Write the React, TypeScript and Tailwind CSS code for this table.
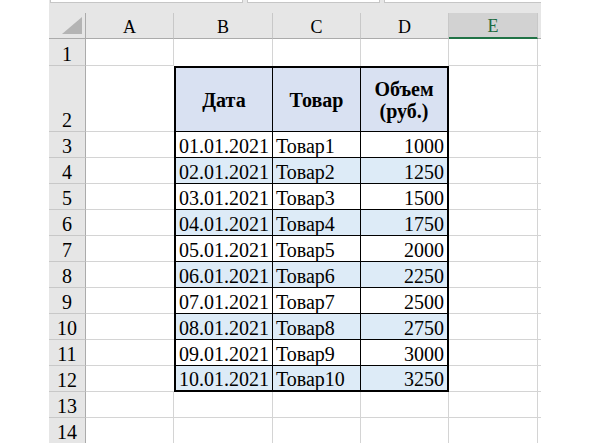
import React from 'react';

const cols = ['A', 'B', 'C', 'D', 'E', 'F'];
const rowNums = Array.from({ length: 14 }, (_, i) => i + 1);

type Cell = { text: string; align: 'left' | 'right' | 'center' };

const cellValue = (r: number, c: string): Cell | null => {
  if (r === 2) {
    if (c === 'B') return { text: 'Дата', align: 'center' };
    if (c === 'C') return { text: 'Товар', align: 'center' };
    if (c === 'D') return { text: 'Объем (руб.)', align: 'center' };
  }
  if (r >= 3 && r <= 12) {
    const n = r - 2;
    if (c === 'B') return { text: `${String(n).padStart(2, '0')}.01.2021`, align: 'right' };
    if (c === 'C') return { text: `Товар${n}`, align: 'left' };
    if (c === 'D') return { text: String(1000 + 250 * (n - 1)), align: 'right' };
  }
  return null;
};

const bodyClass = (r: number, ci: number) => {
  const inTable = r >= 2 && r <= 12 && ci >= 1 && ci <= 3;
  const parts: string[] = ['flex items-end min-w-0 overflow-hidden'];

  if (ci === 5) parts.push('border-r-0');
  else if (ci === 0 && r >= 2 && r <= 12) parts.push('border-r-0');
  else if (inTable && ci === 3) parts.push('border-r-2 border-r-black');
  else if (inTable) parts.push('border-r border-r-black');
  else parts.push('border-r border-r-[#d4d4d4]');

  if (r === 1 && ci >= 1 && ci <= 3) parts.push('border-b-0');
  else if (inTable && r === 12) parts.push('border-b-2 border-b-black');
  else if (inTable) parts.push('border-b border-b-black');
  else parts.push('border-b border-b-[#d4d4d4]');

  if (inTable && ci === 1) parts.push('border-l-2 border-l-black');
  if (inTable && r === 2) parts.push('border-t-2 border-t-black');

  if (inTable && r === 2) parts.push('bg-[#d9e1f2]');
  else if (inTable && r % 2 === 0) parts.push('bg-[#ddebf7]');
  else parts.push('bg-white');

  return parts.join(' ');
};

export default function App() {
  return (
    <div className="w-[591px] h-[443px] overflow-hidden bg-white flex font-[family-name:'Liberation_Serif','Times_New_Roman',serif] text-black">
      <div className="w-[49px] shrink-0" />
      <div className="w-[492px] shrink-0 flex flex-col">
        {/* ribbon edge: name box + formula bar */}
        <div className="h-[13px] shrink-0 bg-[#e6e6e6] flex gap-[4px] pl-[1px]">
          <div className="w-[193px] h-[3px] bg-white border-b border-x border-[#c6c6c6]" />
          <div className="w-[133px] h-[3px] bg-white border-b border-x border-[#c6c6c6]" />
          <div className="flex-1 h-[3px] bg-white border-b border-l border-[#c6c6c6]" />
        </div>

        <div className="grid grid-cols-[37px_88px_99px_88px_88px_89px_3px] grid-rows-[26px_27px_66px_repeat(12,26px)]">
          {/* column headers */}
          <div className="relative bg-[#e6e6e6] border-r border-b border-[#ababab]">
            <svg className="absolute right-[3px] bottom-[4px]" width="20" height="17" viewBox="0 0 20 17">
              <polygon points="20,0 20,17 0,17" fill="#b4b4b4" />
            </svg>
          </div>
          {cols.map((c) =>
            c === 'E' ? (
              <div
                key={c}
                className="bg-[#d2d2d2] border-r border-r-[#c8c8c8] border-b-2 border-b-[#217346] flex items-end justify-center text-[18px] leading-[22px] text-[#1e6b41]"
              >
                {c}
              </div>
            ) : c === 'F' ? (
              <div key={c} className="bg-[#e6e6e6] border-b border-b-[#ababab]" />
            ) : (
              <div
                key={c}
                className="bg-[#e6e6e6] border-r border-r-[#c8c8c8] border-b border-b-[#ababab] flex items-end justify-center text-[18px] leading-[22px]"
              >
                {c}
              </div>
            )
          )}

          {rowNums.map((r) => (
            <React.Fragment key={r}>
              <div className="bg-[#e6e6e6] border-r border-r-[#ababab] border-b border-b-[#c8c8c8] flex items-end justify-center text-[20px] leading-[22px]">
                {r}
              </div>
              {cols.map((c, ci) => {
                const v = cellValue(r, c);
                return (
                  <div key={c} className={bodyClass(r, ci)}>
                    {v && v.align === 'center' && (
                      <div className="w-full h-full flex items-center justify-center text-center font-bold text-[20px] leading-[22px] px-[6px]">
                        {v.text}
                      </div>
                    )}
                    {v && v.align === 'right' && (
                      <div className="w-full text-right whitespace-nowrap text-[20px] leading-[22px] pr-[3px]">{v.text}</div>
                    )}
                    {v && v.align === 'left' && (
                      <div className="w-full text-left whitespace-nowrap text-[20px] leading-[22px] pl-[3px]">{v.text}</div>
                    )}
                  </div>
                );
              })}
            </React.Fragment>
          ))}
        </div>
      </div>
    </div>
  );
}
